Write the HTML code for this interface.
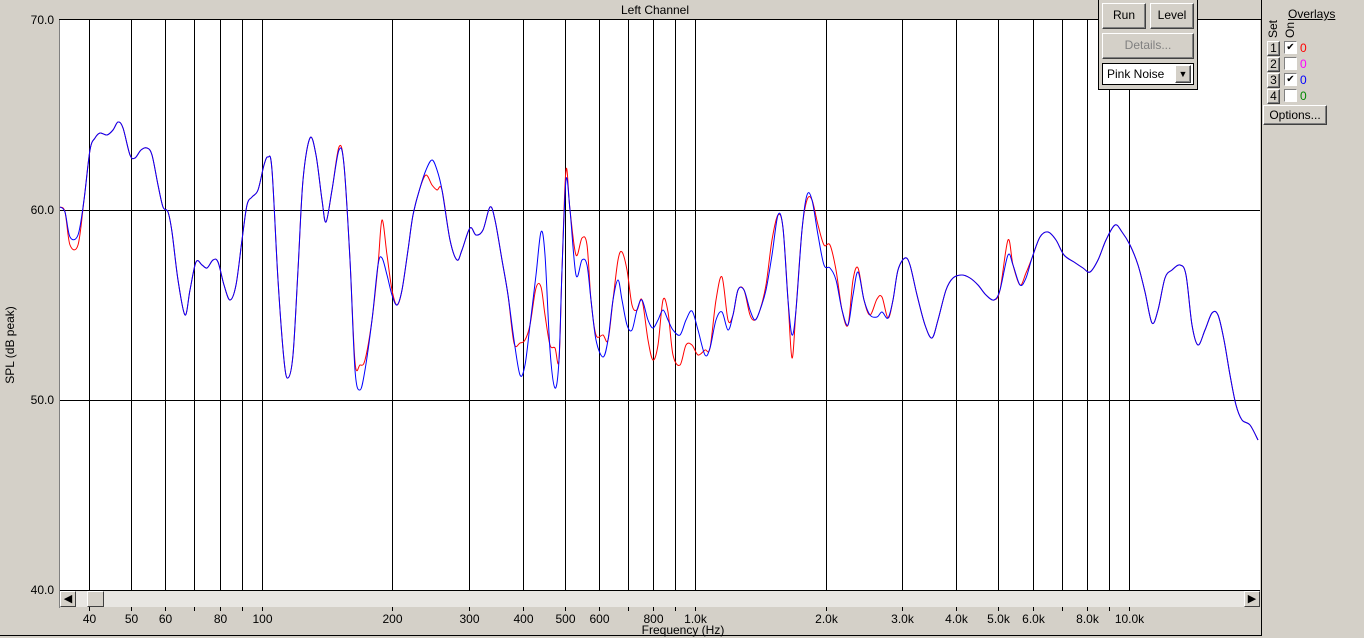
<!DOCTYPE html>
<html><head><meta charset="utf-8"><style>
body{margin:0;width:1364px;height:638px;background:#d4d0c8;font-family:"Liberation Sans",sans-serif;font-size:12px;position:relative;overflow:hidden}
.a{position:absolute}
.btn{position:absolute;background:#d4d0c8;border:1px solid;border-color:#fff #404040 #404040 #fff;box-shadow:inset -1px -1px #808080;text-align:center;font-size:12px;line-height:22px}
.sb{position:absolute;width:14px;height:14px;background:#d4d0c8;border:1px solid;border-color:#fff #404040 #404040 #fff;font-size:11px;line-height:14px;text-align:center}
.cb{position:absolute;width:11px;height:11px;background:#fff;border:1px solid;border-color:#808080 #fff #fff #808080;font-size:10px;line-height:11px;text-align:center}
</style></head><body>
<div class="a" style="left:0;top:0;width:1262px;height:636px;border-right:1px solid #000;border-bottom:1px solid #000;box-sizing:border-box"></div>
<div class="a" style="left:600px;top:3px;width:110px;text-align:center">Left Channel</div>
<svg class="a" style="left:0;top:0" width="1364" height="638" id="s">
<rect x="60" y="20" width="1200" height="570" fill="#fff"/>
<g id="grid" stroke="#000" stroke-width="1"></g>
<line x1="59.5" y1="19" x2="59.5" y2="608" stroke="#808080"/>
<line x1="59" y1="19.5" x2="1261" y2="19.5" stroke="#000"/>
<rect x="61" y="591" width="1198" height="16" fill="#e8e6e2"/>
<path id="red" fill="none" stroke="#f00" stroke-width="1"/>
<path id="blue" fill="none" stroke="#00f" stroke-width="1"/>
<g id="lab" font-size="12" fill="#000"></g>
<text x="14" y="345" font-size="12" transform="rotate(-90 14 345)" text-anchor="middle">SPL (dB peak)</text>
<text x="683" y="634" font-size="12" text-anchor="middle">Frequency (Hz)</text>
<text x="54" y="24" font-size="12" text-anchor="end">70.0</text>
<text x="54" y="214" font-size="12" text-anchor="end">60.0</text>
<text x="54" y="404" font-size="12" text-anchor="end">50.0</text>
<text x="54" y="594" font-size="12" text-anchor="end">40.0</text>
</svg>
<div class="sb" style="left:60px;top:591px">&#9664;</div>
<div class="sb" style="left:87px;top:591px;width:15px"></div>
<div class="sb" style="left:1244px;top:591px">&#9654;</div>
<div class="a" style="left:1098px;top:0;width:100px;height:90px;background:#d4d0c8;border:1px solid #000;border-top:none;box-sizing:border-box"></div>
<div class="btn" style="left:1102px;top:3px;width:42px;height:24px">Run</div>
<div class="btn" style="left:1150px;top:3px;width:42px;height:24px">Level</div>
<div class="btn" style="left:1102px;top:33px;width:90px;height:24px;color:#808080">Details...</div>
<div class="a" style="left:1102px;top:63px;background:#fff;border:1px solid #000;line-height:20px;padding-left:4px;box-sizing:border-box;width:92px;height:22px">Pink Noise</div>
<div class="btn" style="left:1175px;top:65px;width:14px;height:16px;line-height:16px;font-size:9px">&#9660;</div>
<div class="a" style="left:1288px;top:7px;text-decoration:underline">Overlays</div>
<div class="a" style="left:1266px;top:38px;transform:rotate(-90deg);transform-origin:0 0">Set</div>
<div class="a" style="left:1283px;top:38px;transform:rotate(-90deg);transform-origin:0 0">On</div>
<div class="btn" style="left:1267px;top:41px;width:11px;height:13px;line-height:13px">1</div>
<div class="btn" style="left:1267px;top:57px;width:11px;height:13px;line-height:13px">2</div>
<div class="btn" style="left:1267px;top:73px;width:11px;height:13px;line-height:13px">3</div>
<div class="btn" style="left:1267px;top:89px;width:11px;height:13px;line-height:13px">4</div>
<div class="cb" style="left:1284px;top:41px">✔</div>
<div class="cb" style="left:1284px;top:57px"></div>
<div class="cb" style="left:1284px;top:73px">✔</div>
<div class="cb" style="left:1284px;top:89px"></div>
<div class="a" style="left:1300px;top:41px;color:#f00">0</div>
<div class="a" style="left:1300px;top:57px;color:#f0f">0</div>
<div class="a" style="left:1300px;top:73px;color:#00f">0</div>
<div class="a" style="left:1300px;top:89px;color:#080">0</div>
<div class="btn" style="left:1263px;top:105px;width:62px;height:18px;line-height:18px">Options...</div>
<script>
const X=f=>89+433.7*Math.log10(f/40);
const g=document.getElementById('grid'),lab=document.getElementById('lab');
const fs=[40,50,60,70,80,90,100,200,300,400,500,600,700,800,900,1000,2000,3000,4000,5000,6000,7000,8000,9000,10000];
const L={40:'40',50:'50',60:'60',80:'80',100:'100',200:'200',300:'300',400:'400',500:'500',600:'600',800:'800',1000:'1.0k',2000:'2.0k',3000:'3.0k',4000:'4.0k',5000:'5.0k',6000:'6.0k',8000:'8.0k',10000:'10.0k'};
let h='',t='';
fs.forEach(f=>{let x=Math.round(X(f))+.5;h+=`<line x1="${x}" y1="20" x2="${x}" y2="590"/><line x1="${x}" y1="607" x2="${x}" y2="611"/>`;if(L[f])t+=`<text x="${x}" y="623" text-anchor="middle">${L[f]}</text>`});
[210.5,400.5].forEach(y=>h+=`<line x1="60" y1="${y}" x2="1260" y2="${y}"/>`);
h+=`<line x1="60" y1="590.5" x2="1260" y2="590.5"/>`;
g.innerHTML=h;lab.innerHTML=t;
const B=[[60,207],[65,212],[70,237],[78,235],[84,200],[90,150],[95,138],[100,133],[107,135],[113,130],[118,122],[123,128],[130,155],[135,158],[141,150],[147,148],[152,155],[158,185],[163,207],[168,212],[172,232],[178,280],[185,315],[190,290],[196,262],[202,265],[207,268],[213,260],[218,262],[224,285],[230,300],[236,285],[242,240],[247,205],[252,197],[258,190],[264,165],[268,157],[272,170],[278,280],[284,360],[288,378],[293,355],[298,270],[303,180],[310,138],[316,155],[322,200],[326,222],[332,190],[339,150],[344,165],[350,260],[355,370],[360,390],[365,370],[372,320],[378,265],[382,258],[387,275],[392,295],[397,305],[402,290],[408,250],[413,215],[420,188],[426,170],[432,160],[437,170],[442,190],[450,240],[457,260],[462,250],[470,228],[476,235],[483,230],[490,207],[495,220],[502,260],[508,295],[514,340],[520,375],[525,365],[530,325],[536,275],[541,232],[545,255],[550,350],[555,388],[559,360],[562,270],[566,180],[570,210],[576,275],[582,260],[587,265],[591,300],[596,340],[603,357],[608,340],[613,300],[618,280],[622,300],[627,325],[632,330],[637,310],[642,300],[648,320],[653,328],[658,320],[663,310],[668,320],[673,330],[680,335],[686,320],[692,311],[698,330],[705,355],[710,348],[716,320],[722,312],[728,330],[733,315],[738,290],[744,290],[750,310],[755,320],[760,310],[766,290],[772,255],[778,215],[783,228],[788,300],[792,335],[796,310],[802,230],[807,195],[812,200],[818,235],[824,265],[830,268],[836,280],[842,310],[848,325],[853,295],[858,272],[864,300],[870,315],[877,317],[882,312],[888,318],[893,300],[898,270],[905,258],[910,265],[917,295],[925,325],[932,338],[938,320],[946,290],[953,278],[962,275],[970,278],[978,285],[986,295],[994,300],[1000,290],[1008,255],[1013,265],[1020,285],[1026,278],[1032,258],[1040,237],[1048,232],[1056,240],[1064,255],[1074,262],[1083,268],[1090,272],[1098,260],[1106,240],[1115,225],[1122,232],[1130,245],[1138,265],[1145,292],[1152,323],[1158,310],[1165,278],[1172,270],[1180,265],[1186,275],[1192,325],[1198,345],[1205,330],[1212,313],[1218,315],[1224,340],[1230,375],[1236,405],[1242,420],[1250,425],[1258,440]];
const D={70:8,78:10,339:-3,355:-8,360:-25,365:-10,382:-38,387:-20,392:-5,426:5,432:25,437:20,514:3,520:-32,525:-25,536:13,541:55,545:60,550:-5,555:-40,566:-10,576:-20,582:-22,587:-20,596:-5,603:-22,618:-20,622:-48,627:-55,632:-25,648:20,653:32,658:25,663:-10,668:-8,673:25,680:30,686:25,692:34,698:25,705:-5,716:-20,722:-35,728:-10,750:5,766:-5,772:-15,792:23,807:5,818:-10,824:-20,830:-23,836:-10,853:-15,858:-4,877:-18,882:-15,1008:-15,1026:-5};
const R=B.map(([x,y])=>[x,y+(D[x]||0)]);
function path(p){let d=`M${p[0][0]},${p[0][1]}`;for(let i=0;i<p.length-1;i++){const p0=p[i-1]||p[i],p1=p[i],p2=p[i+1],p3=p[i+2]||p2;d+=` C${p1[0]+(p2[0]-p0[0])/6},${p1[1]+(p2[1]-p0[1])/6} ${p2[0]-(p3[0]-p1[0])/6},${p2[1]-(p3[1]-p1[1])/6} ${p2[0]},${p2[1]}`}return d}
document.getElementById('red').setAttribute('d',path(R));
document.getElementById('blue').setAttribute('d',path(B));
</script>
</body></html>
